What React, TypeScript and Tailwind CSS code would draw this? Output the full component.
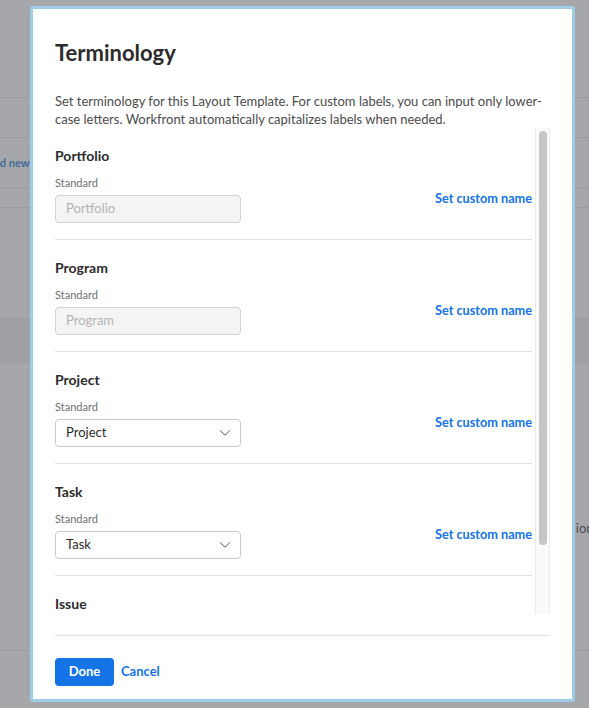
import { ChevronDown } from "lucide-react";

type Term = { name: string; editable: boolean };

const TERMS: Term[] = [
  { name: "Portfolio", editable: false },
  { name: "Program", editable: false },
  { name: "Project", editable: true },
  { name: "Task", editable: true },
  { name: "Issue", editable: true },
];

function TermSection({ term }: { term: Term }) {
  return (
    <div className="border-b border-[#e1e1e1] pt-[18px] pb-4">
      <h3 className="text-[14px] leading-5 font-bold text-[#2c2c2c]">{term.name}</h3>
      <div className="mt-[9px] flex items-center justify-between">
        <div className="flex flex-col gap-1">
          <span className="text-[11px] leading-4 text-[#6e6e6e]">Standard</span>
          {term.editable ? (
            <div className="flex h-7 w-[186px] items-center justify-between rounded-[4px] border border-[#c9c9c9] bg-white pl-[10px] pr-[6px] text-[13px] text-[#2c2c2c]">
              <span>{term.name}</span>
              <ChevronDown size={18} strokeWidth={1.3} className="text-[#4b4b4b]" />
            </div>
          ) : (
            <div className="flex h-7 w-[186px] items-center rounded-[4px] border border-[#d3d3d3] bg-[#f4f4f4] pl-[10px] text-[13px] text-[#b3b3b3]">
              {term.name}
            </div>
          )}
        </div>
        <button className="text-[12.7px] font-bold text-[#1473e6]">Set custom name</button>
      </div>
    </div>
  );
}

export default function App() {
  return (
    <div
      className="relative h-[708px] w-[589px] overflow-hidden bg-[#a6a7ab]"
      style={{ fontFamily: "Lato, 'Liberation Sans', sans-serif" }}
    >
      {/* page behind the overlay */}
      <div className="flex flex-col">
        <div className="h-[98px] border-b border-[#9b9ca0]" />
        <div className="h-[40px] border-b border-[#9b9ca0]" />
        <div className="flex h-[51px] items-center border-b border-[#9b9ca0]">
          <span className="-ml-[14px] text-[11px] font-bold text-[#3f6b96]">Add new</span>
        </div>
        <div className="h-[19px] border-b border-[#9b9ca0]" />
        <div className="h-[111px] border-b border-[#9b9ca0]" />
        <div className="h-[45px] bg-[#9fa0a4]" />
        <div className="flex h-[287px] items-center justify-end border-b border-[#9b9ca0] pt-[44px]">
          <span className="-mr-[2px] text-[13px] text-[#4e4f52]">ior</span>
        </div>
      </div>

      {/* dialog */}
      <div className="absolute left-[30px] top-[6px] flex h-[696px] w-[545px] flex-col rounded-[3px] border-[3px] border-[#9fcde8] bg-white px-[22px] pt-[30px]">
        <h2 className="text-[22px] leading-7 font-bold text-[#2c2c2c]">Terminology</h2>
        <p className="mt-[25px] text-[13px] leading-[18px] text-[#4b4b4b]">
          Set terminology for this Layout Template. For custom labels, you can input only lower-
          <br />
          case letters. Workfront automatically capitalizes labels when needed.
        </p>

        <div className="flex h-[486px] gap-[3px] overflow-hidden">
          <div className="flex-1">
            {TERMS.map((t) => (
              <TermSection key={t.name} term={t} />
            ))}
          </div>
          <div className="flex w-[15px] shrink-0 justify-center border-x border-[#ececec] bg-[#fafafa] pt-[3px]">
            <div className="h-[414px] w-[8px] rounded-full bg-[#c6c6c6]" />
          </div>
        </div>

        <div className="mt-[21px] border-t border-[#e1e1e1] pt-[22px]">
          <div className="flex items-center gap-[7px]">
            <button className="h-7 w-[59px] rounded-[4px] bg-[#1473e6] text-[13px] font-bold text-white">
              Done
            </button>
            <button className="text-[13px] font-bold text-[#1473e6]">Cancel</button>
          </div>
        </div>
      </div>
    </div>
  );
}
